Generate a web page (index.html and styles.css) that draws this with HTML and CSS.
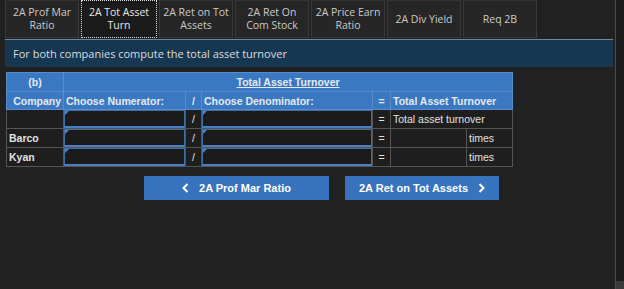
FILE: index.html
```html
<!DOCTYPE html>
<html>
<head>
<meta charset="utf-8">
<link rel="stylesheet" href="styles.css">
</head>
<body>
<div class="page">
  <div class="main">
    <div class="tabs">
      <div class="tab">2A Prof Mar<br>Ratio</div>
      <div class="tab active">2A Tot Asset<br>Turn</div>
      <div class="tab">2A Ret on Tot<br>Assets</div>
      <div class="tab">2A Ret On<br>Com Stock</div>
      <div class="tab">2A Price Earn<br>Ratio</div>
      <div class="tab">2A Div Yield</div>
      <div class="tab">Req 2B</div>
    </div>
    <div class="instr">For both companies compute the total asset turnover</div>
    <table class="grid">
      <colgroup>
        <col class="c-co"><col class="c-num"><col class="c-op"><col class="c-den"><col class="c-eq"><col class="c-res"><col class="c-unit">
      </colgroup>
      <tr class="h1">
        <th>(b)</th>
        <th colspan="6"><u>Total Asset Turnover</u></th>
      </tr>
      <tr class="h2">
        <th class="r">Company</th>
        <th class="l">Choose Numerator:</th>
        <th>/</th>
        <th class="l">Choose Denominator:</th>
        <th>=</th>
        <th class="l" colspan="2">Total Asset Turnover</th>
      </tr>
      <tr>
        <td></td>
        <td class="inp"><div class="box"></div></td>
        <td class="op">/</td>
        <td class="inp"><div class="box"></div></td>
        <td class="op">=</td>
        <td colspan="2">Total asset turnover</td>
      </tr>
      <tr>
        <td class="co">Barco</td>
        <td class="inp"><div class="box"></div></td>
        <td class="op">/</td>
        <td class="inp"><div class="box"></div></td>
        <td class="op">=</td>
        <td></td>
        <td>times</td>
      </tr>
      <tr>
        <td class="co">Kyan</td>
        <td class="inp"><div class="box"></div></td>
        <td class="op">/</td>
        <td class="inp"><div class="box"></div></td>
        <td class="op">=</td>
        <td></td>
        <td>times</td>
      </tr>
    </table>
    <div class="nav">
      <div class="btn prev"><svg class="chev" width="7" height="10" viewBox="0 0 7 10"><polyline points="5.5,1 1.5,5 5.5,9" fill="none" stroke="#fff" stroke-width="2"/></svg>2A Prof Mar Ratio</div>
      <div class="btn next">2A Ret on Tot Assets<svg class="chev" width="7" height="10" viewBox="0 0 7 10"><polyline points="1.5,1 5.5,5 1.5,9" fill="none" stroke="#fff" stroke-width="2"/></svg></div>
    </div>
  </div>
  <div class="scroll"><div class="thumb"></div></div>
</div>
</body>
</html>
```
FILE: styles.css
```css
html, body {
  margin: 0;
  padding: 0;
  background: #212121;
  height: 100%;
}
.page {
  display: flex;
  height: 289px;
  overflow: hidden;
}
.main {
  flex: 1;
  padding-left: 5px;
  padding-right: 2px;
}
.scroll {
  width: 8px;
  border-left: 1px solid #4a4a4a;
  background: #1d1d1d;
  display: flex;
  flex-direction: column;
  justify-content: flex-end;
}
.thumb {
  height: 8px;
  background: #3a3a3a;
}
.tabs {
  display: flex;
  gap: 2px;
  height: 39px;
  align-items: flex-start;
}
.tab {
  box-sizing: border-box;
  width: 74px;
  height: 38px;
  border: 1px solid #3a3a3a;
  border-top-color: #333;
  background: #262626;
  color: #cacaca;
  font-family: "Open Sans", "DejaVu Sans", sans-serif;
  font-size: 10.5px;
  line-height: 13px;
  display: flex;
  align-items: center;
  justify-content: center;
  text-align: center;
}
.tab.active {
  width: 76px;
  background: #1b1b1b;
  border: 1px dotted #e0e0e0;
  color: #e6e6e6;
}
.instr {
  border-top: 1px solid #6f8796;
  background: #163752;
  color: #dcdcdc;
  font-family: "Open Sans", "DejaVu Sans", sans-serif;
  font-size: 11px;
  height: 27px;
  line-height: 27px;
  padding-left: 8px;
}
.grid {
  margin-top: 5px;
  margin-left: 1px;
  border-collapse: collapse;
  font-family: "Liberation Sans", Arial, sans-serif;
  font-size: 10.5px;
  color: #e2e2e2;
  table-layout: fixed;
  width: 506px;
  border: 1px solid #5a5a5a;
}
.c-co { width: 57px; }
.c-num { width: 122px; }
.c-op { width: 16px; }
.c-den { width: 171px; }
.c-eq { width: 18px; }
.c-res { width: 76px; }
.c-unit { width: 46px; }
.grid th {
  background: #3a78c2;
  color: #e4e9f0;
  font-weight: bold;
  border: 1px solid #5a8ccc;
  padding: 0 2px;
  white-space: nowrap;
  overflow: hidden;
}
.grid tr.h1 th { height: 18px; }
.grid tr.h2 th { height: 17px; }
.grid th.l { text-align: left; }
.grid th.r { text-align: right; }
.grid u { text-decoration: underline; }
.grid td {
  background: #1e1e1e;
  border: 1px solid #555;
  height: 17px;
  padding: 0 2px;
  white-space: nowrap;
  overflow: hidden;
}
.grid td.co { font-weight: bold; }
.grid td.op { text-align: center; padding: 0; }
.grid td.inp { padding: 0; }
.box {
  position: relative;
  box-sizing: border-box;
  height: 18px;
  border: 1px solid #3f6ea8;
  border-bottom: 2px solid #4a7fc4;
  background: #1b1b1b;
}
.box::before {
  content: "";
  position: absolute;
  left: 0;
  top: 0;
  border-top: 4px solid #4a86d0;
  border-right: 4px solid transparent;
}
.nav {
  display: flex;
  gap: 16px;
  margin-top: 9px;
  padding-left: 139px;
}
.btn {
  box-sizing: border-box;
  height: 24px;
  background: #3973bd;
  color: #ffffff;
  font-family: "Liberation Sans", Arial, sans-serif;
  font-weight: bold;
  font-size: 11px;
  display: flex;
  align-items: center;
  justify-content: center;
  gap: 10px;
}
.btn.prev { width: 185px; }
.btn.next { width: 154px; }
.chev { display: block; }
```
